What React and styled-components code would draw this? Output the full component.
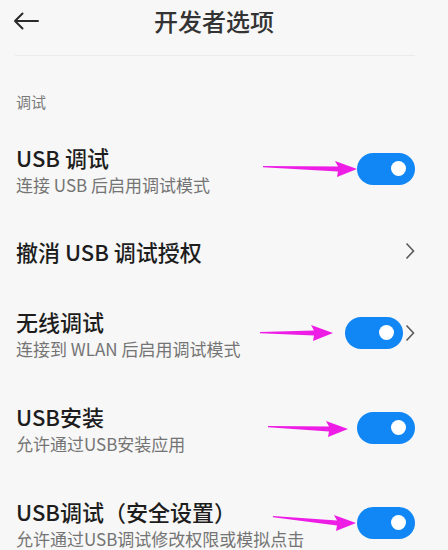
import React from 'react';
import styled, { createGlobalStyle } from 'styled-components';

const GlobalStyle = createGlobalStyle`
    html, body {
        margin: 0;
        padding: 0;
        background: #f7f7f7;
    }
    body {
        font-family: "Noto Sans CJK SC", "Noto Sans", sans-serif;
    }
`

const Page = styled.div`
    width: 448px;
    height: 550px;
    overflow: hidden;
    background: #f7f7f7;
`

const Header = styled.div`
    display: flex;
    align-items: center;
    height: 42px;
    padding-left: 13px;
`

const Title = styled.div`
    margin-left: 115px;
    font-size: 24px;
    font-weight: 500;
    line-height: 42px;
    color: #333333;
`

const Divider = styled.div`
    height: 1px;
    margin: 13px 33px 0 15px;
    background: #ebebeb;
`

const Section = styled.div`
    margin: 36px 0 0 16px;
    font-size: 15px;
    line-height: 20px;
    color: #7a7a7a;
`

const Row = styled.div`
    display: flex;
    align-items: center;
    padding: ${props => props.$pad || '20px 0'};
    padding-left: 16px;
    padding-right: 33px;
`

const Texts = styled.div`
    flex: 1;
    min-width: 0;
`

const RowTitle = styled.div`
    font-size: 22px;
    font-weight: 500;
    line-height: 28px;
    color: #1d1d1d;
    white-space: nowrap;
`

const RowSub = styled.div`
    font-size: 17px;
    line-height: 27px;
    color: #747474;
    white-space: nowrap;
`

const Right = styled.div`
    display: flex;
    align-items: center;
    gap: 2px;
    margin-top: ${props => props.$up ? '-4px' : '0'};
`

const Switch = styled.div`
    position: relative;
    width: 58px;
    height: 32px;
    border-radius: 16px;
    background: #1187f6;
    flex-shrink: 0;
`

const Knob = styled.div`
    position: absolute;
    right: 9px;
    top: 8.5px;
    width: 15px;
    height: 15px;
    border-radius: 50%;
    background: #ffffff;
`

const ArrowSvg = styled.svg`
    position: absolute;
    right: calc(100% + ${props => props.$gap}px);
    top: ${props => 6 + props.$shift}px;
    overflow: visible;
`

const Chevron = styled.svg`
    flex-shrink: 0;
`

function Pointer({ len, gap = 0, dy = 4, shift = 0 }) {
    const w = len;
    const points = [
        `0,${10 - dy}`,
        `${w - 19},7.5`,
        `${w - 22},2`,
        `${w},10`,
        `${w - 20},18`,
        `${w - 19},12.5`,
        `0,${11.3 - dy}`,
    ].join(' ');
    return (
        <ArrowSvg width={w} height="20" $gap={gap} $shift={shift}>
            <polygon points={points} fill="#ee1de6" />
        </ArrowSvg>
    );
}

function Toggle({ arrow }) {
    return (
        <Switch>
            <Knob />
            {arrow && <Pointer {...arrow} />}
        </Switch>
    );
}

function Arrow() {
    return (
        <Chevron width="10" height="18" viewBox="0 0 10 18">
            <polyline points="1.5,1.5 8.5,9 1.5,16.5" fill="none" stroke="#5a5a5a" strokeWidth="1.6" />
        </Chevron>
    );
}

function BackIcon() {
    return (
        <svg width="26" height="18" viewBox="0 0 26 18">
            <path d="M2 9 H25 M9.5 1.5 L2 9 L9.5 16.5" fill="none" stroke="#2b2b2b" strokeWidth="2" strokeLinecap="round" strokeLinejoin="round" />
        </svg>
    );
}

function App() {
    return (
        <Page>
            <GlobalStyle />
            <Header>
                <BackIcon />
                <Title>开发者选项</Title>
            </Header>
            <Divider />
            <Section>调试</Section>

            <Row $pad="31px 0 20px">
                <Texts>
                    <RowTitle>USB 调试</RowTitle>
                    <RowSub>连接 USB 后启用调试模式</RowSub>
                </Texts>
                <Right $up>
                    <Toggle arrow={{ len: 94, gap: 0, dy: 3 }} />
                </Right>
            </Row>

            <Row $pad="19px 0 22px">
                <Texts>
                    <RowTitle>撤消 USB 调试授权</RowTitle>
                </Texts>
                <Right>
                    <Arrow />
                </Right>
            </Row>

            <Row $pad="20px 0 20px">
                <Texts>
                    <RowTitle>无线调试</RowTitle>
                    <RowSub>连接到 WLAN 后启用调试模式</RowSub>
                </Texts>
                <Right $up>
                    <Toggle arrow={{ len: 73, gap: 12, dy: 1 }} />
                    <Arrow />
                </Right>
            </Row>

            <Row $pad="20px 0 20px">
                <Texts>
                    <RowTitle>USB安装</RowTitle>
                    <RowSub>允许通过USB安装应用</RowSub>
                </Texts>
                <Right $up>
                    <Toggle arrow={{ len: 80, gap: 9, dy: 3, shift: 1 }} />
                </Right>
            </Row>

            <Row $pad="20px 0 0">
                <Texts>
                    <RowTitle>USB调试（安全设置）</RowTitle>
                    <RowSub>允许通过USB调试修改权限或模拟点击</RowSub>
                </Texts>
                <Right $up>
                    <Toggle arrow={{ len: 83, gap: 1, dy: 7 }} />
                </Right>
            </Row>
        </Page>
    );
}

export default App;
